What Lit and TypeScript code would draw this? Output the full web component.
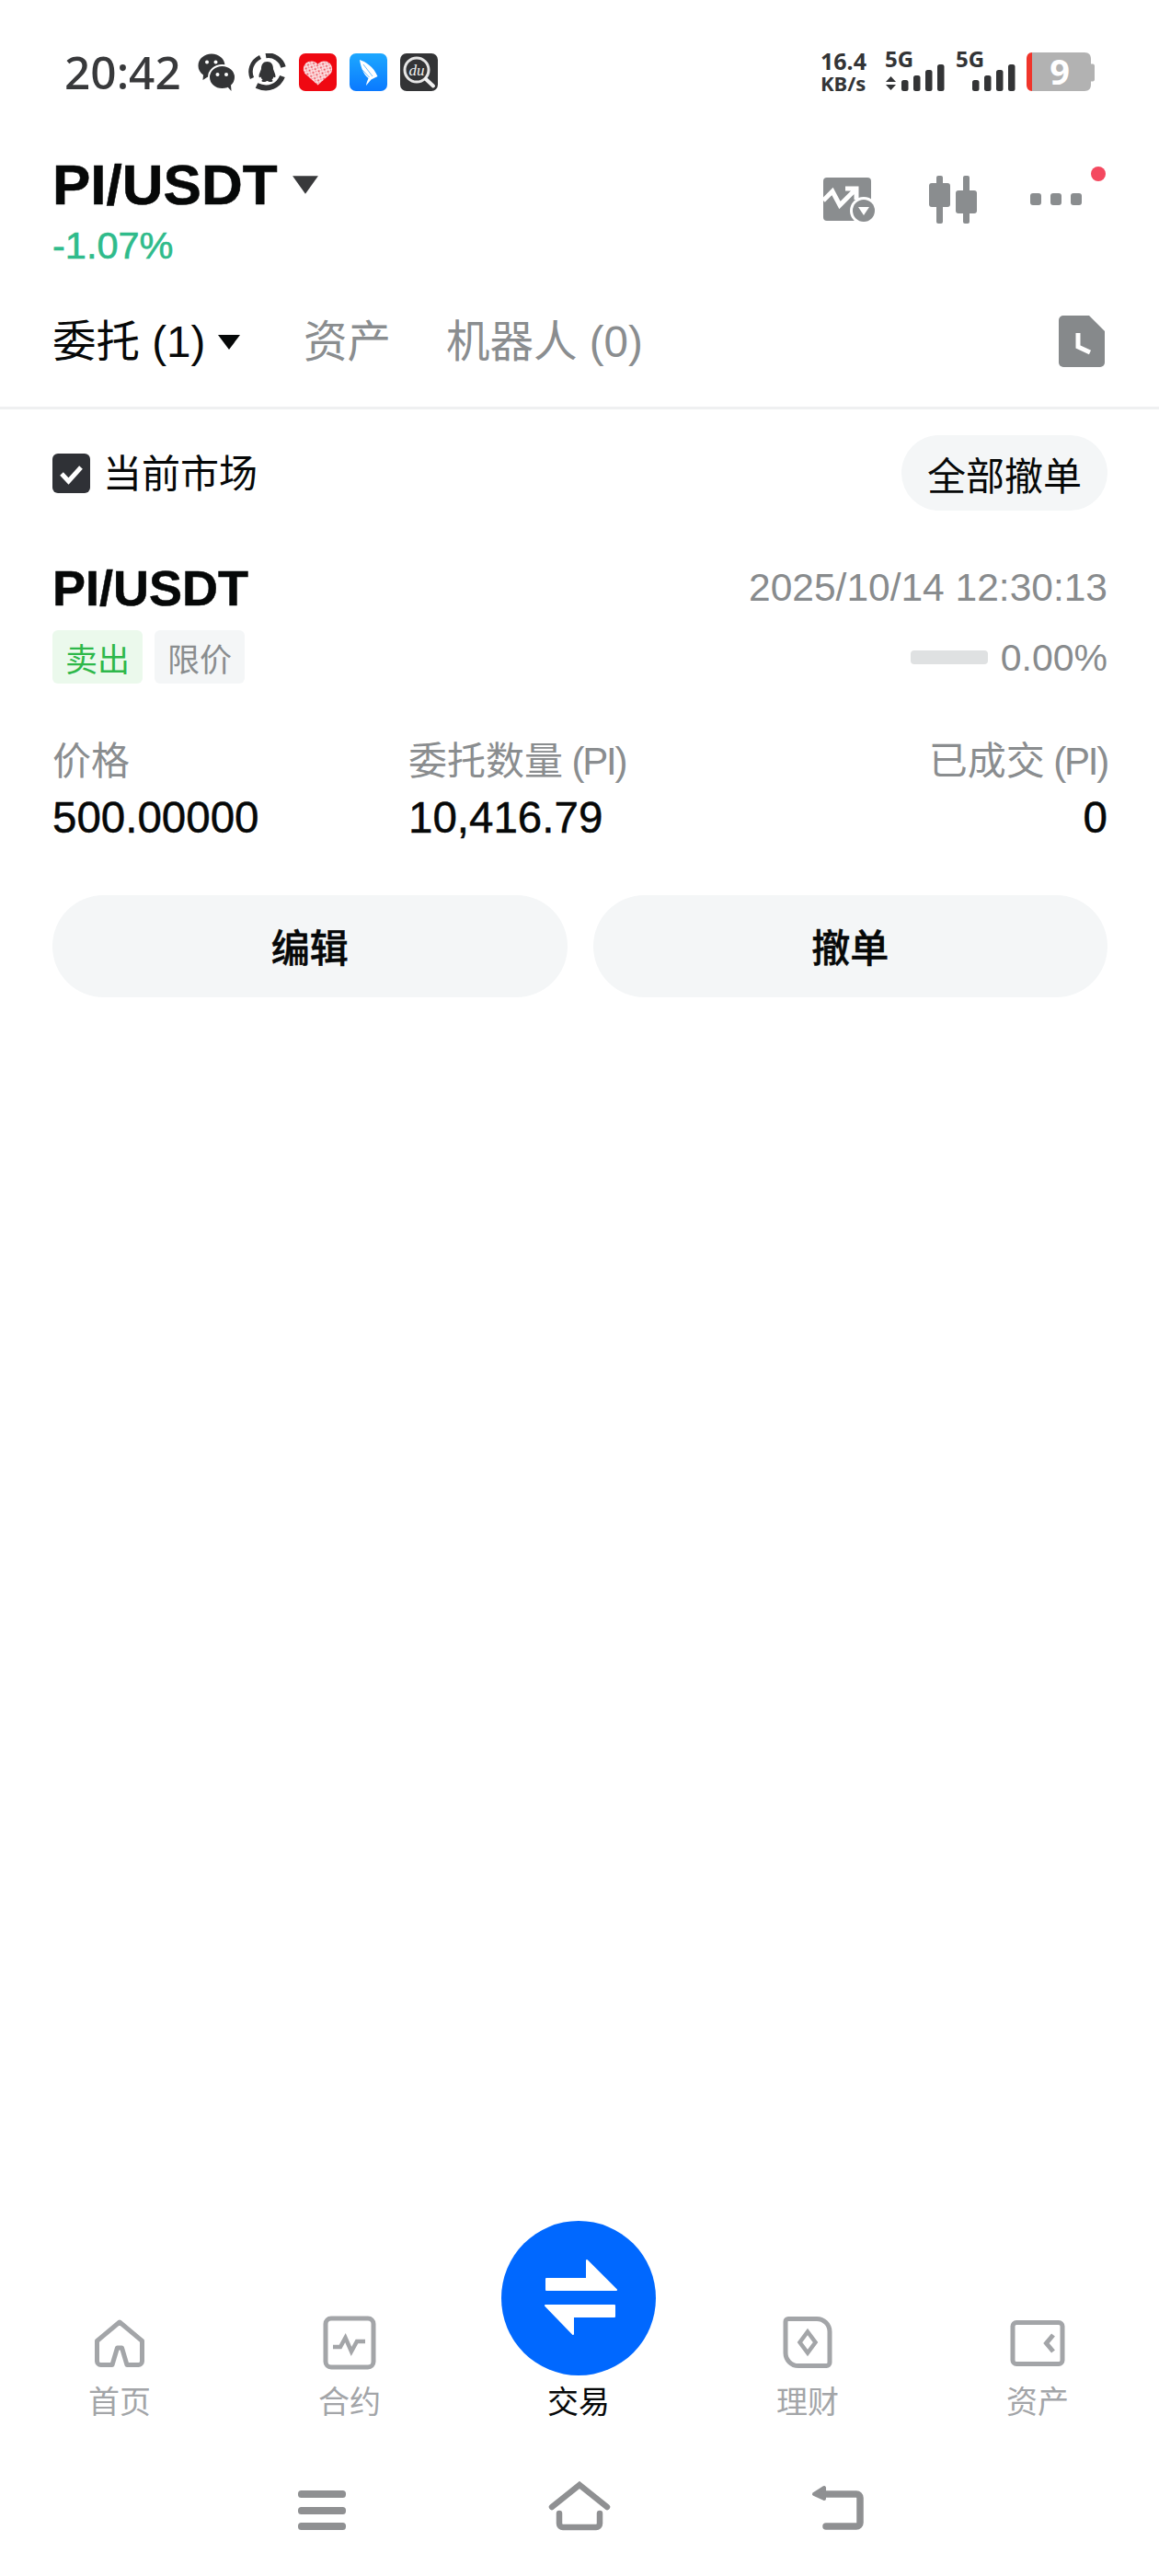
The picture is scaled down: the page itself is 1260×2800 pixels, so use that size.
import { LitElement, html, css, svg } from "lit";
import { customElement } from "lit/decorators.js";

const wechat = svg`<svg class="ni" viewBox="0 0 41 41">
  <path fill="#333436" d="M15 0.500C23 0.500 29.500 6 29.500 13.500C29.500 21 23 26.500 15 26.500C13.500 26.500 12 26.300 10.500 25.800L5.500 29L6 23.500C2.500 21 0.500 17.500 0.500 13.500C0.500 6 7 0.500 15 0.500Z"/>
  <circle cx="10" cy="9.500" r="2" fill="#fff"/><circle cx="19.500" cy="9.500" r="2" fill="#fff"/>
  <ellipse cx="26.500" cy="26" rx="14.500" ry="13" fill="#333436" stroke="#fff" stroke-width="2"/>
  <path fill="#333436" d="M32 36l4.500 5-.5-7z"/>
  <circle cx="21.500" cy="23" r="2" fill="#fff"/><circle cx="31" cy="23" r="2" fill="#fff"/>
</svg>`;

const qq = svg`<svg class="ni" viewBox="0 0 41 41">
  <g fill="none" stroke="#333436" stroke-width="4.500">
    <path d="M4 27C0.500 19 3 9 13 4"/>
    <path d="M19 2.500C28 1 36 7 38 15" stroke-width="5.500"/>
    <path d="M37 25C33 35 22 41 9 35" stroke-width="6"/>
  </g>
  <path fill="#333436" d="M20.500 9C25 9 27 12.500 27 16.500C27 18 29.500 22 29.500 25C29.500 26.500 28.500 26.500 27.500 25.500C27 27 26.500 28 25.500 28.500C27 29.500 27 31 24 31C22.500 31 21.500 30.500 20.500 30C19.500 30.500 18.500 31 17 31C14 31 14 29.500 15.500 28.500C14.500 28 14 27 13.500 25.500C12.500 26.500 11.500 26.500 11.500 25C11.500 22 14 18 14 16.500C14 12.500 16 9 20.500 9Z"/>
</svg>`;

const pdd = svg`<svg class="ni" viewBox="0 0 41 41">
  <defs><pattern id="pd" width="4.500" height="4.500" patternUnits="userSpaceOnUse" patternTransform="rotate(30)">
    <rect width="4.500" height="4.500" fill="#fbdfe1"/><rect x="0.500" y="0.500" width="1.800" height="1.800" fill="#ec3a46"/><rect x="2.800" y="2.800" width="1.200" height="1.200" fill="#f06a75"/>
  </pattern></defs>
  <rect width="41" height="41" rx="7" fill="#ef0812"/>
  <path fill="url(#pd)" d="M20.500 34.500L6.500 22C3 18 5 9.500 12 8.500C16 8 19 9.500 20.500 12C22 9.500 25 8 29 8.500C36 9.500 38 18 34.500 22Z"/>
</svg>`;

const feather = svg`<svg class="ni" viewBox="0 0 41 41">
  <defs><linearGradient id="bl" x1="0" y1="0" x2="0" y2="1"><stop offset="0" stop-color="#1da8ff"/><stop offset="1" stop-color="#0a79ff"/></linearGradient></defs>
  <rect width="41" height="41" rx="7" fill="url(#bl)"/>
  <path fill="#fff" d="M11 7C17 9 26 14 30.500 25L23.500 28.500L18 35C18.500 31 20 29 20.500 27C15 23 12 14 11 7Z"/>
  <path fill="none" stroke="#6cc0ff" stroke-width="1" d="M15 12L25 25M14 18L21.500 26"/>
</svg>`;

const du = svg`<svg class="ni" viewBox="0 0 41 41">
  <rect width="41" height="41" rx="7" fill="#333436"/>
  <circle cx="18" cy="18" r="13" fill="none" stroke="#e6e6e6" stroke-width="3"/>
  <path d="M28 28L36 35.500" stroke="#f2f2f2" stroke-width="4" stroke-linecap="round"/>
  <text class="du" x="18" y="23.500" text-anchor="middle">du</text>
</svg>`;

const bars = (x: number) => svg`
  <rect x="${x}" y="47" width="7.500" height="12" rx="2.500" fill="#333436"/>
  <rect x="${x + 13}" y="42" width="7.500" height="17" rx="2.500" fill="#333436"/>
  <rect x="${x + 26}" y="36" width="7.500" height="23" rx="2.500" fill="#333436"/>
  <rect x="${x + 39}" y="30" width="7.500" height="29" rx="2.500" fill="#333436"/>`;

const statusRight = svg`<svg class="sr" viewBox="0 0 320 80">
  <text class="s1"><tspan x="12" y="36">16.4</tspan> <tspan class="s2" x="12" y="59">KB/s</tspan></text>
  <text class="s3" x="82" y="33">5G</text>
  <path fill="#333436" d="M83 49l5.500-6 5.500 6zM83 52h11l-5.500 6z"/>
  ${bars(100)}
  <text class="s3" x="159" y="33">5G</text>
  ${bars(177)}
  <path fill="#b2b2b2" d="M242 17H299C304 17 306 20 306 24V29.500H308C309.500 29.500 310 30.500 310 32V46C310 47.500 309.500 48.500 308 48.500H306V52C306 56 304 59 299 59H242Z"/>
  <path fill="#f0352b" d="M242 17V59C238 59 236 56 236 52V24C236 20 238 17 242 17Z"/>
  <text class="s9" x="272" y="52" text-anchor="middle">9</text>
</svg>`;

const G = "#a3a5a8";
const nav = [
  { label: "首页", icon: svg`<path d="M30 8L54.500 28.500V50.500A4 4 0 0 1 50.500 54.500H38L32.500 36H27.500L22 54.500H9.500A4 4 0 0 1 5.500 50.500V28.500Z" fill="none" stroke="${G}" stroke-width="5" stroke-linejoin="round"/>` },
  { label: "合约", icon: svg`<rect x="4" y="4" width="52" height="53" rx="6" fill="none" stroke="${G}" stroke-width="5"/><path d="M12 35H20L25.500 25L32 40L38 29H47" fill="none" stroke="${G}" stroke-width="4.500"/>` },
  { label: "交易", active: true, icon: null },
  { label: "理财", shift: true, icon: svg`<path d="M9 4.500H40A14 14 0 0 1 54 18.500V52A3.500 3.500 0 0 1 50.500 55.500H20A14 14 0 0 1 6 41.500V7.500A3 3 0 0 1 9 4.500Z" fill="none" stroke="${G}" stroke-width="5"/><path d="M30 18.500L38.500 30L30 41.500L21.500 30Z" fill="none" stroke="${G}" stroke-width="4.500"/>` },
  { label: "资产", shift: true, icon: svg`<rect x="3" y="8.500" width="54" height="45" rx="4" fill="none" stroke="${G}" stroke-width="5"/><path d="M47 22L39.500 31L47 40" fill="none" stroke="${G}" stroke-width="5"/>` },
];

@customElement("app-root")
export class AppRoot extends LitElement {
  static styles = css`
    :host { display: block; width: 1260px; height: 2800px; background: #fff; }
    .page { width: 1260px; height: 2800px; display: flex; flex-direction: column; background: #fff; color: #060808; overflow: hidden;
      font-family: "Liberation Sans", "Noto Sans CJK SC", sans-serif; }

    .status { height: 156px; box-sizing: border-box; padding: 40px 60px 0 70px; display: flex; justify-content: space-between; align-items: flex-start; }
    .sl { display: flex; align-items: center; height: 77px; }
    .time { font-family: "Noto Sans", sans-serif; font-weight: 500; font-size: 49.500px; line-height: 77px; color: #38393b; width: 145px; }
    .notif { display: flex; gap: 14px; }
    .ni { width: 41px; height: 41px; display: block; }
    .du { font-family: "Liberation Serif", serif; font-style: italic; font-size: 17px; fill: #f2f2f2; }
    .sr { width: 320px; height: 80px; display: block; }
    .s1 { font-family: "Noto Sans", sans-serif; font-weight: 700; font-size: 25px; fill: #333436; }
    .s2 { font-size: 22px; }
    .s3 { font-family: "Noto Sans", sans-serif; font-weight: 700; font-size: 24px; fill: #333436; }
    .s9 { font-family: "Noto Sans", sans-serif; font-weight: 700; font-size: 38px; fill: #fff; }

    .head { height: 164px; box-sizing: border-box; padding: 14px 78px 0 57px; display: flex; justify-content: space-between; align-items: flex-start; }
    .pair { display: flex; align-items: center; height: 62px; font-size: 62px; font-weight: 700; line-height: 62px; -webkit-text-stroke: 0.6px #060808; }
    .pair svg { width: 30px; height: 22px; margin-left: 15px; display: block; }
    .chg { margin-top: 12px; font-size: 41.500px; line-height: 46px; color: #2fbb8b; -webkit-text-stroke: 0.6px #2fbb8b; }
    .tools { display: flex; margin-top: 16px; }
    .tools svg { display: block; height: 60px; }
    .t1 { width: 62px; }
    .t2 { width: 60px; margin-left: 51px; }
    .dots { position: relative; width: 66px; margin-left: 50px; }
    .dots svg { width: 66px; }
    .dot { position: absolute; left: 70px; top: -5px; width: 16px; height: 16px; border-radius: 50%; background: #f4485f; }

    .tabs { height: 125px; box-sizing: border-box; padding: 0 59px 18px 57px; display: flex; align-items: center; border-bottom: 3px solid #eff0f1; font-size: 47.500px; color: #8a8d8f; }
    .tab { flex: none; line-height: 60px; white-space: pre; }
    .tab.on { width: 273px; color: #060808; display: flex; align-items: center; }
    .tab.on svg { width: 26px; height: 18px; margin-left: 13px; display: block; }
    .tab.mid { width: 155px; }
    .doc { width: 50px; height: 56px; margin-left: auto; margin-top: -2px; display: block; }

    .body { padding: 0 56px 0 57px; }
    .filter { display: flex; justify-content: space-between; align-items: center; padding-top: 28px; }
    .chk { display: flex; align-items: center; gap: 14px; font-size: 42px; color: #060808; }
    .chk svg { width: 41px; height: 43px; display: block; }
    .chk span { margin-top: -5px; }
    .all { width: 224px; height: 82px; border-radius: 41px; background: #f4f6f7; display: flex; align-items: center; justify-content: center; font-size: 42px; }

    .r1 { margin-top: 54px; display: flex; justify-content: space-between; align-items: center; height: 60px; }
    .sym { font-size: 54px; font-weight: 700; -webkit-text-stroke: 0.5px #060808; }
    .date { font-size: 42.500px; color: #888b8d; }
    .r2 { margin-top: 16px; display: flex; justify-content: space-between; align-items: center; height: 58px; }
    .tags { display: flex; gap: 13px; }
    .tag { width: 98px; height: 58px; border-radius: 6px; display: flex; align-items: center; justify-content: center; font-size: 35px; }
    .sell { background: #ebf9ec; color: #2eb84a; }
    .lim { background: #f4f6f7; color: #8a8d8f; }
    .prog { display: flex; align-items: center; gap: 14px; font-size: 41px; color: #888b8d; }
    .prog span { padding-top: 2px; }
    .bar { width: 84px; height: 15px; border-radius: 4px; background: #dfe1e2; }

    .cols { margin-top: 60px; display: grid; grid-template-columns: 387px 1fr auto; }
    .lab { font-size: 42px; line-height: 50px; color: #8a8d8f; white-space: pre; }
    .unit { letter-spacing: -2.200px; }
    .val { margin-top: 10px; font-size: 47.500px; line-height: 52px; -webkit-text-stroke: 0.5px #060808; }
    .end { text-align: right; }

    .btns { margin-top: 58px; display: flex; gap: 28px; }
    .btn { flex: 1; height: 111px; box-sizing: border-box; padding-bottom: 3px; border-radius: 56px; background: #f4f6f7; display: flex; align-items: center; justify-content: center; font-size: 42px; font-weight: 500; -webkit-text-stroke: 0.5px #060808; }

    .spacer { flex: 1; }
    .nav { display: grid; grid-template-columns: repeat(5, 1fr); padding: 0 5px; align-items: end; }
    .item { display: flex; flex-direction: column; align-items: center; font-size: 34px; line-height: 40px; color: #a3a5a8; }
    .item.shift { margin-right: 4px; }
    .item .ic { width: 60px; height: 60px; display: block; margin-bottom: 15px; }
    .item.act { color: #060808; margin-right: 2px; }
    .item .fab { width: 168px; height: 168px; display: block; margin-bottom: 9px; }

    .sys { height: 169px; box-sizing: border-box; padding: 66px 0 0 315px; display: flex; gap: 210px; }
    .sys svg { width: 70px; height: 56px; display: block; }
  `;

  render() {
    return html`<div class="page">
      <div class="status">
        <div class="sl">
          <div class="time">20:42</div>
          <div class="notif">${wechat}${qq}${pdd}${feather}${du}</div>
        </div>
        ${statusRight}
      </div>

      <div class="head">
        <div>
          <div class="pair">PI/USDT<svg viewBox="0 0 28 20"><path d="M1 1H27L14 19Z" fill="#38393b"/></svg></div>
          <div class="chg">-1.07%</div>
        </div>
        <div class="tools">
          <svg class="t1" viewBox="0 0 62 60">
            <rect x="2" y="7" width="52" height="47" rx="4" fill="#8a8d8f"/>
            <path d="M2 32L12 22L20 37L38 19M26 19H38V31" fill="none" stroke="#fff" stroke-width="5"/>
            <circle cx="46" cy="43" r="15" fill="#fff"/>
            <circle cx="46" cy="43" r="12" fill="#8a8d8f"/>
            <path d="M40 39H52L46 48Z" fill="#fff"/>
          </svg>
          <svg class="t2" viewBox="0 0 60 60" fill="#8a8d8f">
            <rect x="12" y="5" width="7" height="52" rx="2"/><rect x="4" y="13" width="23" height="26" rx="3"/>
            <rect x="41" y="5" width="7" height="52" rx="2"/><rect x="33" y="21" width="23" height="25" rx="3"/>
          </svg>
          <div class="dots">
            <svg viewBox="0 0 66 60" fill="#8a8d8f">
              <rect x="4" y="24" width="12" height="13" rx="3"/><rect x="26" y="24" width="12" height="13" rx="3"/><rect x="48" y="24" width="12" height="13" rx="3"/>
            </svg>
            <span class="dot"></span>
          </div>
        </div>
      </div>

      <div class="tabs">
        <div class="tab on">委托 (1)<svg viewBox="0 0 26 18"><path d="M1 1H25L13 17Z" fill="#060808"/></svg></div>
        <div class="tab mid">资产</div>
        <div class="tab">机器人 (0)</div>
        <svg class="doc" viewBox="0 0 50 56">
          <path d="M5 0H33L50 17V51A5 5 0 0 1 45 56H5A5 5 0 0 1 0 51V5A5 5 0 0 1 5 0Z" fill="#86898b"/>
          <path d="M21 19V34L34 40" fill="none" stroke="#fff" stroke-width="5"/>
        </svg>
      </div>

      <div class="body">
        <div class="filter">
          <div class="chk">
            <svg viewBox="0 0 41 43">
              <rect width="41" height="43" rx="6" fill="#2f3136"/>
              <path d="M10 22L17.500 30L31 15" fill="none" stroke="#fff" stroke-width="5"/>
            </svg>
            <span>当前市场</span>
          </div>
          <div class="all">全部撤单</div>
        </div>

        <div class="r1"><div class="sym">PI/USDT</div><div class="date">2025/10/14 12:30:13</div></div>
        <div class="r2">
          <div class="tags"><div class="tag sell">卖出</div><div class="tag lim">限价</div></div>
          <div class="prog"><div class="bar"></div><span>0.00%</span></div>
        </div>

        <div class="cols">
          <div><div class="lab">价格</div><div class="val">500.00000</div></div>
          <div><div class="lab">委托数量<span class="unit"> (PI)</span></div><div class="val">10,416.79</div></div>
          <div class="end"><div class="lab">已成交<span class="unit"> (PI)</span></div><div class="val">0</div></div>
        </div>

        <div class="btns"><div class="btn">编辑</div><div class="btn">撤单</div></div>
      </div>

      <div class="spacer"></div>

      <div class="nav">
        ${nav.map((n) =>
          n.active
            ? html`<div class="item act">
                <svg class="fab" viewBox="0 0 168 168">
                  <circle cx="84" cy="84" r="84" fill="#0068ff"/>
                  <path d="M49 63H93V43L125 75H49Z" fill="#fff" stroke="#fff" stroke-width="2" stroke-linejoin="round"/>
                  <path d="M48 92H123V104H78V123Z" fill="#fff" stroke="#fff" stroke-width="2" stroke-linejoin="round"/>
                </svg>
                ${n.label}
              </div>`
            : html`<div class="item ${n.shift ? "shift" : ""}"><svg class="ic" viewBox="0 0 60 60">${n.icon}</svg>${n.label}</div>`
        )}
      </div>

      <div class="sys">
        <svg viewBox="0 0 70 56" fill="#8f9092">
          <rect x="9" y="10" width="52" height="8" rx="3.500"/><rect x="9" y="28" width="52" height="8" rx="3.500"/><rect x="9" y="45" width="52" height="8" rx="3.500"/>
        </svg>
        <svg viewBox="0 0 70 56" fill="none" stroke="#8f9092" stroke-width="6.500" stroke-linecap="round">
          <path d="M5 28L35 4L65 28"/>
          <path d="M13 35V46A4 4 0 0 0 17 50H53A4 4 0 0 0 57 46V35"/>
        </svg>
        <svg viewBox="0 0 70 56" fill="none" stroke="#8f9092" stroke-width="7.500" stroke-linecap="round">
          <path d="M20 14H56A4 4 0 0 1 60 18V45A4 4 0 0 1 56 49H23"/>
          <path d="M10 14L21 7V19Z" fill="#8f9092" stroke-width="4" stroke-linejoin="round"/>
        </svg>
      </div>
    </div>`;
  }
}
